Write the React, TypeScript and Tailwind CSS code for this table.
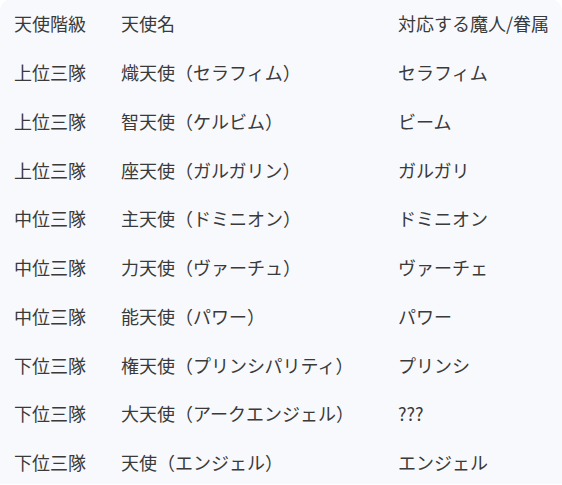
const rows: [string, string, string][] = [
  ["上位三隊", "熾天使（セラフィム）", "セラフィム"],
  ["上位三隊", "智天使（ケルビム）", "ビーム"],
  ["上位三隊", "座天使（ガルガリン）", "ガルガリ"],
  ["中位三隊", "主天使（ドミニオン）", "ドミニオン"],
  ["中位三隊", "力天使（ヴァーチュ）", "ヴァーチェ"],
  ["中位三隊", "能天使（パワー）", "パワー"],
  ["下位三隊", "権天使（プリンシパリティ）", "プリンシ"],
  ["下位三隊", "大天使（アークエンジェル）", "???"],
  ["下位三隊", "天使（エンジェル）", "エンジェル"],
];

function Row({ cells }: { cells: [string, string, string] }) {
  return (
    <div className="grid grid-cols-[121px_277px_1fr] h-[48.75px] items-center">
      <div className="pl-[14px]">{cells[0]}</div>
      <div>{cells[1]}</div>
      <div>{cells[2]}</div>
    </div>
  );
}

export default function App() {
  return (
    <div className="w-[562px] h-[485px] overflow-hidden bg-white">
      <div
        className="bg-[#f8f9fc] rounded-t-[12px] text-[18px] leading-[24px] text-[#3a3a3a] h-full -mt-[1px]"
        style={{ fontFamily: '"Noto Sans CJK JP", "Noto Sans", sans-serif' }}
      >
        <Row cells={["天使階級", "天使名", "対応する魔人/眷属"]} />
        {rows.map((r, i) => (
          <Row key={i} cells={r} />
        ))}
      </div>
    </div>
  );
}
